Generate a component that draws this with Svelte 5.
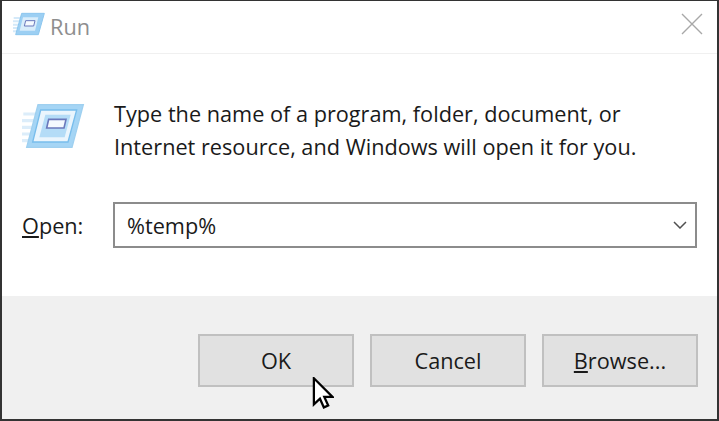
<script>
  let command = '%temp%';
</script>

<div class="dialog">
  <header class="titlebar">
    <svg class="run-icon small" viewBox="0 0 48 36" width="32" height="24" aria-hidden="true">
      <path d="M1 9h10M0 14h9M0 19h8M0 24h7M0 29h6" stroke="#d4e9f9" stroke-width="3" />
      <path d="M13 2h34l-9 32H4z" fill="#9ccff3" stroke="#8cc6ee" stroke-width="1.500" />
      <path d="M15 8h23l-5 20H10z" fill="#d9edfb" />
      <path d="M19 13h14l-2 8H17z" fill="#f6fafe" stroke="#6a78bc" stroke-width="1.500" />
    </svg>
    <span class="title">Run</span>
    <svg class="close" viewBox="0 0 22 22" width="22" height="22" aria-hidden="true">
      <path d="M1 1l20 20M21 1L1 21" stroke="#a8a8a8" stroke-width="1.400" fill="none" />
    </svg>
  </header>

  <main class="body">
    <div class="intro">
      <svg class="run-icon" viewBox="0 0 48 36" width="64" height="48" aria-hidden="true">
        <path d="M1 9h10M0 14h9M0 19h8M0 24h7M0 29h6" stroke="#dcedfa" stroke-width="2.400" />
        <path d="M12 2h34l-8.500 32H3.500z" fill="#a5d5f5" stroke="#9fd0f0" stroke-width="1" />
        <path d="M14 6h27l-6.500 24H8z" fill="#eaf5fd" stroke="#78bdec" stroke-width="1" />
        <path d="M17.500 9.500h19l-4.500 17H13z" fill="#b4dcf7" />
        <path d="M20 13h13l-1.500 6.500H18.500z" fill="#f4f9fe" stroke="#6a78bc" stroke-width="1.200" />
      </svg>
      <p>Type the name of a program, folder, document, or Internet resource, and Windows will open it for you.</p>
    </div>
    <div class="open-row">
      <span class="open-label"><u>O</u>pen:</span>
      <div class="combo">
        <span>{command}</span>
        <svg viewBox="0 0 14 8" width="14" height="8" aria-hidden="true">
          <path d="M1 1l6 6 6-6" stroke="#505050" stroke-width="1.500" fill="none" />
        </svg>
      </div>
    </div>
  </main>

  <footer class="actions">
    <button type="button">OK</button>
    <button type="button">Cancel</button>
    <button type="button"><u>B</u>rowse...</button>
    <svg class="cursor" viewBox="0 0 24 38" width="22" height="33" aria-hidden="true">
      <path d="M1.500 1.500v30l7-6.500 4.500 10 5-2.200-4.500-9.800h9.500z" fill="#fff" stroke="#000" stroke-width="2.600" stroke-linejoin="miter" />
    </svg>
  </footer>
</div>

<style>
  :global(body) {
    margin: 0;
    background: #fff;
  }

  .dialog {
    box-sizing: border-box;
    width: 719px;
    height: 421px;
    display: flex;
    flex-direction: column;
    background: #fff;
    border: 2px solid #333;
    border-top-width: 1px;
    font-family: "Open Sans", "Noto Sans", sans-serif;
    font-size: 21.700px;
    color: #1a1a1a;
    overflow: hidden;
  }

  .titlebar {
    flex: 0 0 52px;
    display: flex;
    align-items: center;
    padding: 0 14px 0 11px;
    gap: 5px;
    border-bottom: 1px solid #f0f0f0;
  }

  .small {
    margin-bottom: 6px;
  }

  .title {
    color: #8e8e8e;
    margin-bottom: 1px;
  }

  .close {
    margin-left: auto;
    margin-bottom: 6px;
  }

  .body {
    flex: 1;
    padding: 43px 20px 0 20px;
  }

  .intro {
    display: flex;
    gap: 28px;
    align-items: flex-start;
  }

  .intro svg {
    flex: none;
    margin-top: 5px;
  }

  .intro p {
    margin: 0;
    line-height: 33px;
    width: 570px;
  }

  .open-row {
    display: flex;
    align-items: center;
    margin-top: 39px;
  }

  .open-label {
    width: 91px;
  }

  .combo {
    box-sizing: border-box;
    flex: 1;
    height: 46px;
    display: flex;
    align-items: center;
    justify-content: space-between;
    padding: 0 8px 0 12px;
    border: 2px solid #8c8c8c;
  }

  .actions {
    position: relative;
    flex: 0 0 123px;
    box-sizing: border-box;
    display: flex;
    justify-content: flex-end;
    gap: 16px;
    padding: 38px 19px 0 0;
    background: #f0f0f0;
  }

  button {
    box-sizing: border-box;
    width: 156px;
    height: 53px;
    font: inherit;
    color: inherit;
    background: #e1e1e1;
    border: 2px solid #c0c0c0;
  }

  .cursor {
    position: absolute;
    left: 310px;
    top: 81px;
  }
</style>
